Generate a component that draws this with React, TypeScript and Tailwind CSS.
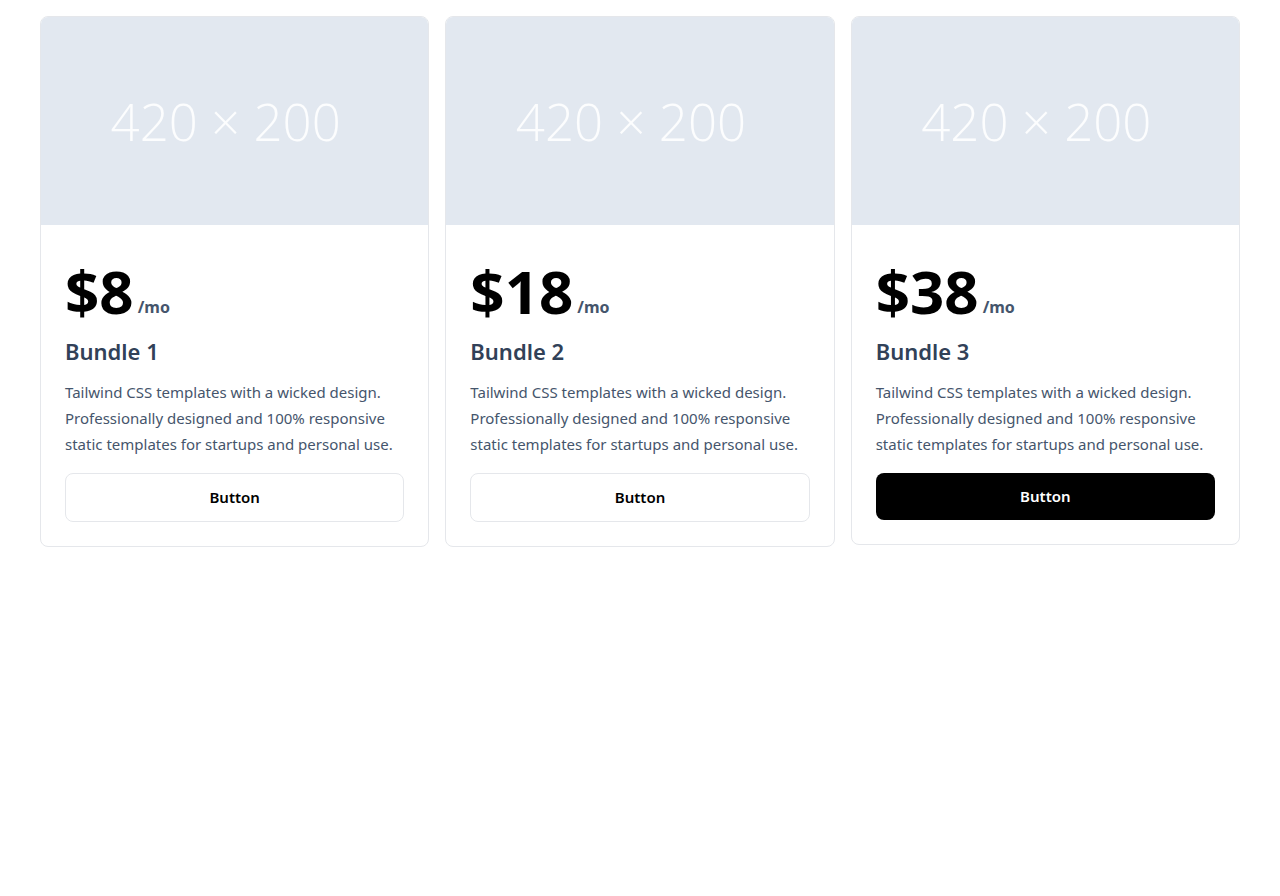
import React from "react";

const bundles = [
  { price: "$8", name: "Bundle 1", dark: false },
  { price: "$18", name: "Bundle 2", dark: false },
  { price: "$38", name: "Bundle 3", dark: true },
];

function Card({ price, name, dark }: { price: string; name: string; dark: boolean }) {
  return (
    <div className="border border-gray-200 rounded-lg overflow-hidden bg-white">
      <div className="h-52 bg-slate-200 flex items-center justify-center pr-[18px]">
        <span className="text-[51px] font-light text-white/90" style={{ fontFamily: '"Open Sans", sans-serif' }}>
          420 × 200
        </span>
      </div>
      <div className="p-6">
        <div className="flex items-end gap-1 mt-3">
          <span className="text-6xl font-bold text-black leading-none">{price}</span>
          <span className="text-base font-bold text-slate-600 mb-0.5">/mo</span>
        </div>
        <h2 className="text-[22px] leading-8 font-semibold text-slate-700 mt-[14px]">{name}</h2>
        <p className="text-[15px] leading-[26px] text-slate-600 mt-3 mb-4">
          Tailwind CSS templates with a wicked design. Professionally designed and 100% responsive static templates for
          startups and personal use.
        </p>
        {dark ? (
          <button className="w-full py-3 rounded-lg bg-black text-white text-[15px] font-semibold">Button</button>
        ) : (
          <button className="w-full py-3 rounded-lg border border-gray-200 text-black text-[15px] font-semibold">
            Button
          </button>
        )}
      </div>
    </div>
  );
}

export default function App() {
  return (
    <div className="min-h-screen bg-white px-10 pt-4" style={{ fontFamily: '"Noto Sans", sans-serif' }}>
      <div className="grid grid-cols-3 gap-4 items-start">
        {bundles.map((b) => (
          <Card key={b.name} {...b} />
        ))}
      </div>
    </div>
  );
}
